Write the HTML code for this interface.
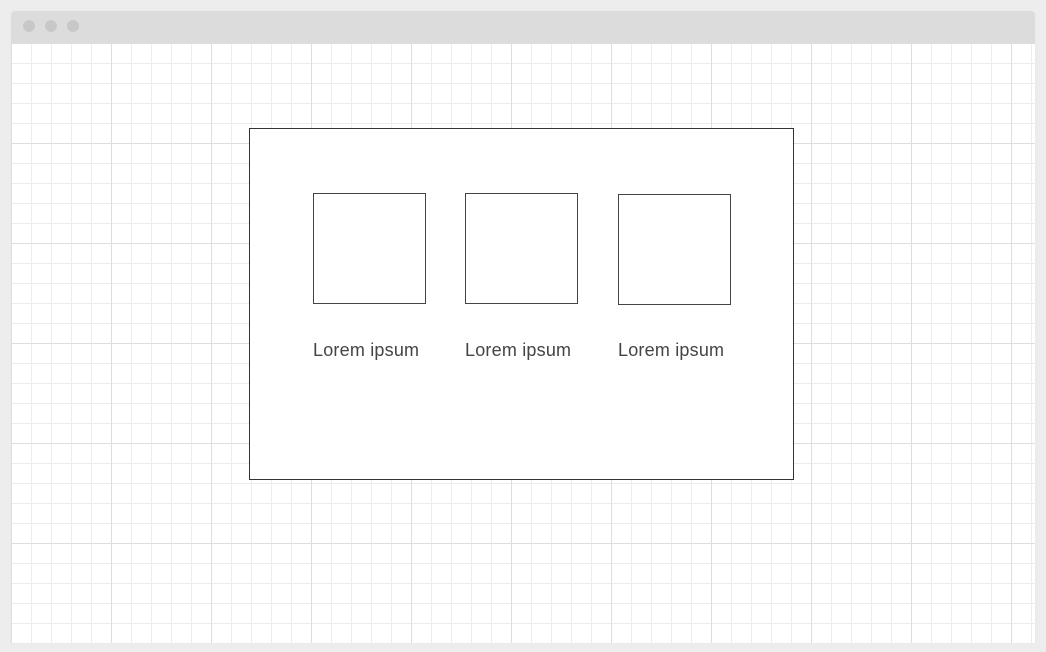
<!DOCTYPE html>
<html><head><style>
html,body{margin:0;padding:0;width:1046px;height:652px;background:#ededed;overflow:hidden;font-family:"Liberation Sans",sans-serif}
.win{position:absolute;left:11px;top:11px;width:1024px;height:632px;background:#fff;border-radius:4px 4px 0 0;overflow:hidden;box-shadow:0 0 1px #ddd}
.bar{position:absolute;left:0;top:0;width:1024px;height:32px;background:#dcdcdc}
.dot{position:absolute;top:9px;width:12px;height:12px;border-radius:50%;background:#c8c8c8}
.grid{position:absolute;left:0;top:32px;width:1024px;height:600px;
background-image:
linear-gradient(to right,#dedede 1px,transparent 1px),
linear-gradient(to bottom,#dedede 1px,transparent 1px),
linear-gradient(to right,#ececec 1px,transparent 1px),
linear-gradient(to bottom,#ececec 1px,transparent 1px);
background-size:100px 100px,100px 100px,20px 20px,20px 20px;
background-position:100px 100px,100px 100px,20px 20px,20px 20px}
.card{position:absolute;left:249px;top:128px;width:543px;height:350px;border:1px solid #333;background:#fff}
.box{position:absolute;width:111px;height:109px;border:1px solid #444}
.t{position:absolute;font-size:18px;color:#444;line-height:20px;letter-spacing:0.2px}
</style></head><body>
<div class="win">
<div class="bar"><div class="dot" style="left:12px"></div><div class="dot" style="left:34px"></div><div class="dot" style="left:56px"></div></div>
<div class="grid"></div>
</div>
<div class="card">
<div class="box" style="left:63px;top:64px"></div>
<div class="box" style="left:215px;top:64px"></div>
<div class="box" style="left:368px;top:65px"></div>
<div class="t" style="left:63px;top:211px">Lorem ipsum</div>
<div class="t" style="left:215px;top:211px">Lorem ipsum</div>
<div class="t" style="left:368px;top:211px">Lorem ipsum</div>
</div>
</body></html>
